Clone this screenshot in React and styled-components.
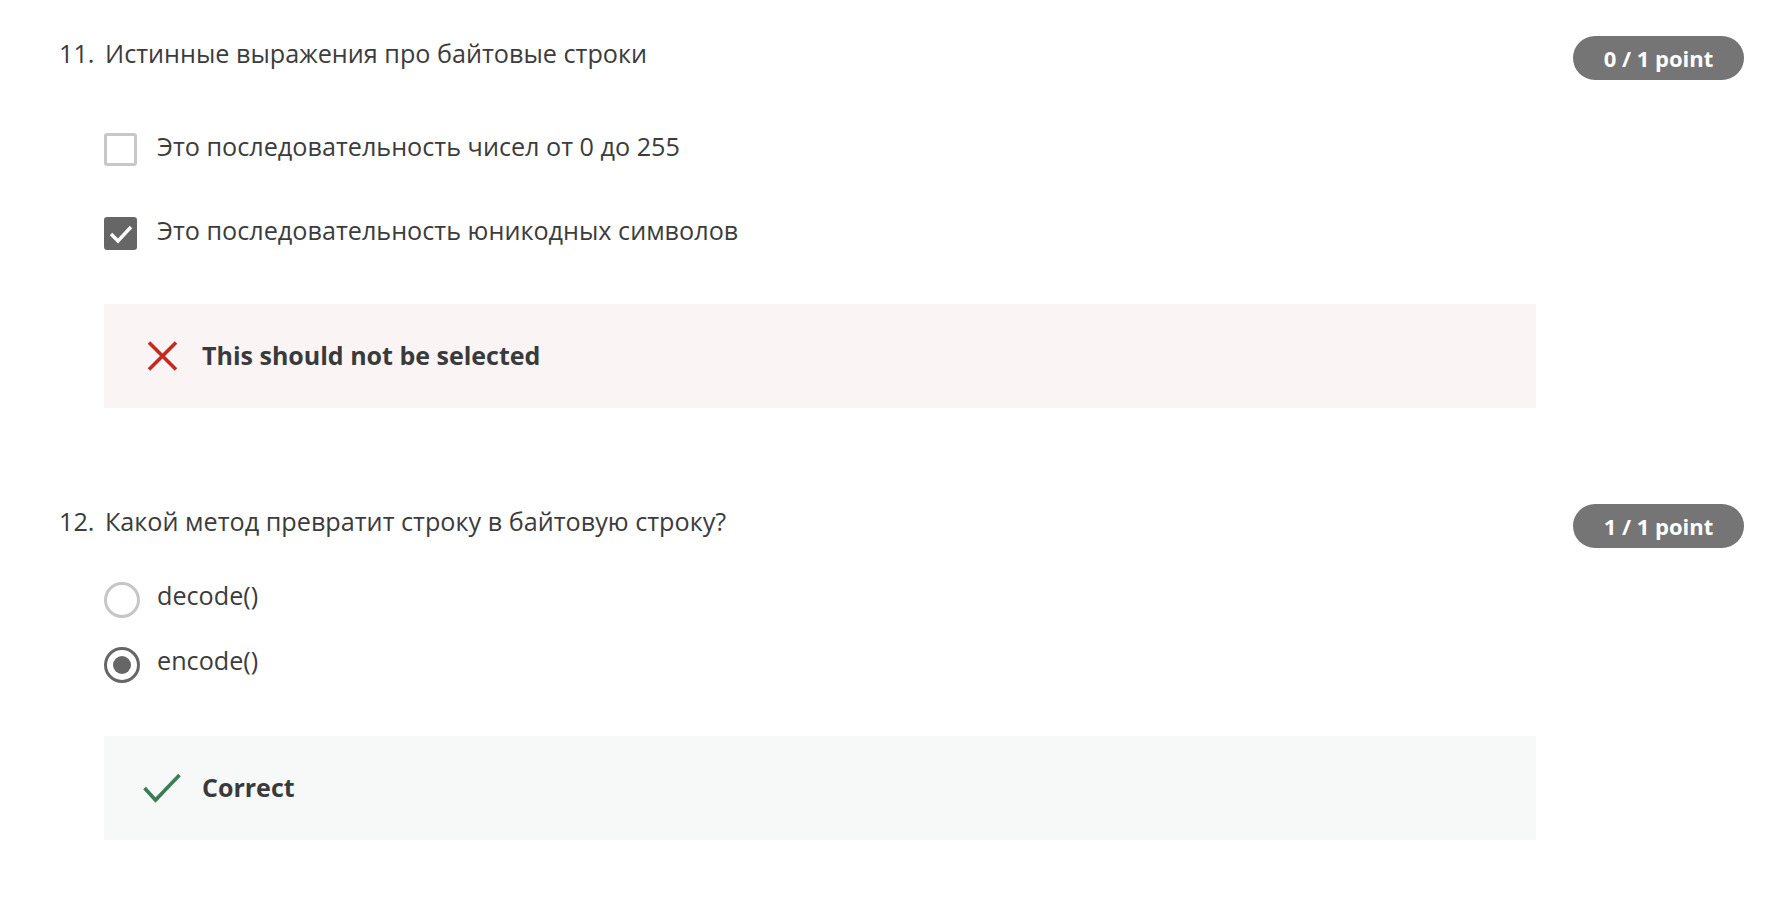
import React from 'react';
import styled, { createGlobalStyle } from 'styled-components';

const Global = createGlobalStyle`
  html, body { margin: 0; padding: 0; background: #ffffff; }
  body { font-family: "Open Sans", "Noto Sans", sans-serif; color: #373a3c; }
`;

const Page = styled.main`
  display: flex;
  flex-direction: column;
  gap: 96px;
  padding: 36px 48px 40px 59px;
`;

const Question = styled.section`
  display: flex;
  flex-direction: column;
`;

const Header = styled.div`
  display: flex;
  align-items: flex-start;
  justify-content: space-between;
`;

const Title = styled.h2`
  margin: 0;
  display: flex;
  font-size: 25.2px;
  line-height: 34px;
  font-weight: 400;
  color: #3c3c3c;
`;

const Num = styled.span`
  flex: none;
  width: 46px;
`;

const Badge = styled.span`
  display: inline-flex;
  align-items: center;
  justify-content: center;
  width: 171px;
  height: 44px;
  border-radius: 22px;
  background: #757575;
  color: #ffffff;
  font-size: 22px;
  font-weight: 700;
`;

const Body = styled.div`
  margin: 0 208px 0 45px;
  display: flex;
  flex-direction: column;
`;

const Options = styled.div`
  display: flex;
  flex-direction: column;
  gap: ${(p) => p.$gap}px;
  margin-top: ${(p) => p.$top}px;
`;

const Option = styled.label`
  display: flex;
  align-items: center;
  gap: ${(p) => p.$gap || 20}px;
  height: ${(p) => p.$h || 33}px;
  font-size: 25.2px;
  line-height: 33px;
  color: #3c3c3c;
`;

const OptionText = styled.span`
  margin-top: ${(p) => p.$lift || -6}px;
`;

const Box = styled.span`
  flex: none;
  width: 33px;
  height: 33px;
  box-sizing: border-box;
  border-radius: 3px;
  border: ${(p) => (p.$checked ? 'none' : '3px solid #c8c8c8')};
  background: ${(p) => (p.$checked ? '#666666' : '#ffffff')};
  display: flex;
  align-items: center;
  justify-content: center;
`;

const Radio = styled.span`
  flex: none;
  width: 36px;
  height: 36px;
  box-sizing: border-box;
  border-radius: 50%;
  border: 3px solid ${(p) => (p.$checked ? '#666666' : '#c6c6c6')};
  display: flex;
  align-items: center;
  justify-content: center;
  &::after {
    content: '';
    display: ${(p) => (p.$checked ? 'block' : 'none')};
    width: 18px;
    height: 18px;
    border-radius: 50%;
    background: #666666;
  }
`;

const Feedback = styled.div`
  margin-top: ${(p) => p.$top || 54}px;
  height: 104px;
  box-sizing: border-box;
  padding-left: 39px;
  display: flex;
  align-items: center;
  gap: 21px;
  background: ${(p) => (p.$ok ? '#f7f9f9' : '#faf4f4')};
  font-size: 25px;
  font-weight: 700;
  color: #383a3c;
`;

const FeedbackText = styled.span`
  padding-bottom: 3px;
`;

const IconWrap = styled.span`
  flex: none;
  width: 38px;
  height: 34px;
  display: flex;
  align-items: center;
  justify-content: center;
`;

const CrossIcon = () => (
  <svg width="31" height="30" viewBox="0 0 31 30">
    <path d="M2 1.5 L29 28.5 M29 1.5 L2 28.5" stroke="#c8291f" strokeWidth="3.6" fill="none" />
  </svg>
);

const CheckIcon = () => (
  <svg width="38" height="30" viewBox="0 0 38 30">
    <path d="M1.5 15 L12.5 27 L36.5 2" stroke="#3b7d53" strokeWidth="3.6" fill="none" />
  </svg>
);

const SmallCheck = () => (
  <svg width="24" height="20" viewBox="0 0 24 20">
    <path d="M2 10 L9 17 L22 3" stroke="#ffffff" strokeWidth="3.4" fill="none" />
  </svg>
);

export default function App() {
  return (
    <>
      <Global />
      <Page>
        <Question>
          <Header>
            <Title>
              <Num>11.</Num>
              <span>Истинные выражения про байтовые строки</span>
            </Title>
            <Badge>0 / 1 point</Badge>
          </Header>
          <Body>
            <Options $gap={51} $top={53}>
              <Option>
                <Box />
                <OptionText>Это последовательность чисел от 0 до 255</OptionText>
              </Option>
              <Option>
                <Box $checked>
                  <SmallCheck />
                </Box>
                <OptionText>Это последовательность юникодных символов</OptionText>
              </Option>
            </Options>
            <Feedback>
              <IconWrap>
                <CrossIcon />
              </IconWrap>
              <FeedbackText>This should not be selected</FeedbackText>
            </Feedback>
          </Body>
        </Question>
        <Question>
          <Header>
            <Title>
              <Num>12.</Num>
              <span>Какой метод превратит строку в байтовую строку?</span>
            </Title>
            <Badge>1 / 1 point</Badge>
          </Header>
          <Body>
            <Options $gap={29} $top={34}>
              <Option $h={36} $gap={17}>
                <Radio />
                <OptionText $lift={-10}>decode()</OptionText>
              </Option>
              <Option $h={36} $gap={17}>
                <Radio $checked />
                <OptionText $lift={-10}>encode()</OptionText>
              </Option>
            </Options>
            <Feedback $ok $top={53}>
              <IconWrap>
                <CheckIcon />
              </IconWrap>
              <FeedbackText>Correct</FeedbackText>
            </Feedback>
          </Body>
        </Question>
      </Page>
    </>
  );
}
